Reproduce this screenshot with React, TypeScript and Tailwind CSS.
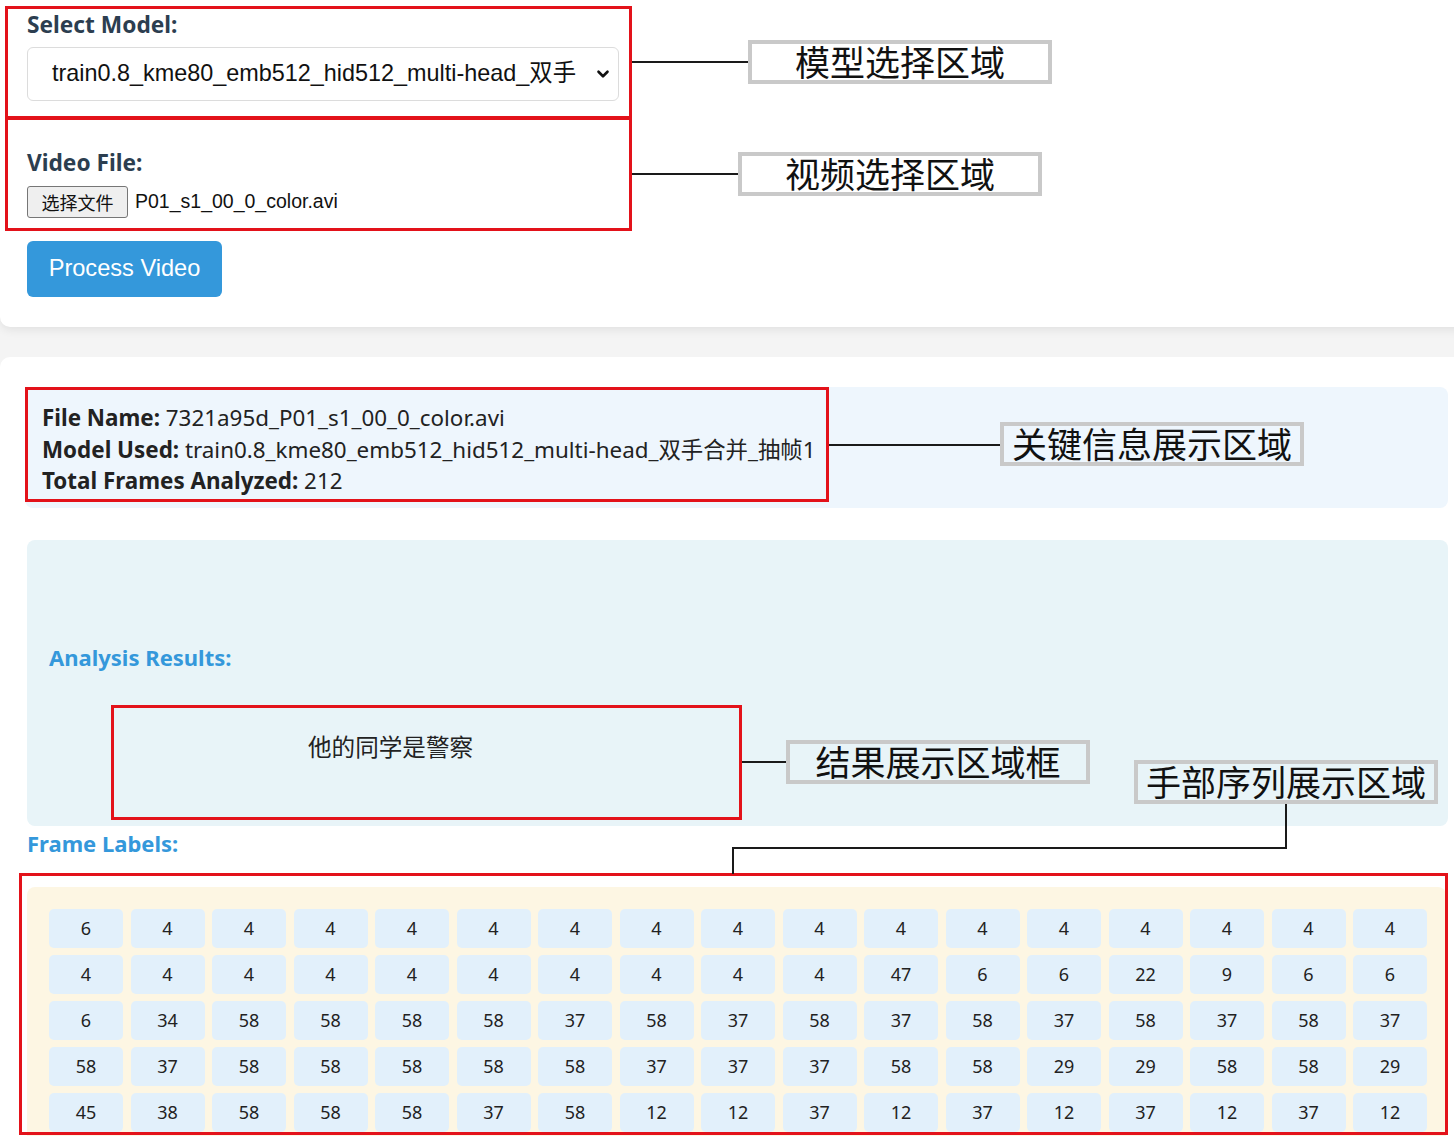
import { ChevronDown } from "lucide-react";

const uiFont = { fontFamily: '"Noto Sans", "Noto Sans CJK SC", sans-serif' };
const arial = { fontFamily: '"Liberation Sans", "Noto Sans CJK SC", sans-serif' };
const noteFont = { fontFamily: '"Noto Sans CJK SC", sans-serif' };

const frameRows = [
  [6, 4, 4, 4, 4, 4, 4, 4, 4, 4, 4, 4, 4, 4, 4, 4, 4],
  [4, 4, 4, 4, 4, 4, 4, 4, 4, 4, 47, 6, 6, 22, 9, 6, 6],
  [6, 34, 58, 58, 58, 58, 37, 58, 37, 58, 37, 58, 37, 58, 37, 58, 37],
  [58, 37, 58, 58, 58, 58, 58, 37, 37, 37, 58, 58, 29, 29, 58, 58, 29],
  [45, 38, 58, 58, 58, 37, 58, 12, 12, 37, 12, 37, 12, 37, 12, 37, 12],
];

function RedBox({ l, t, w, h }: { l: number; t: number; w: number; h: number }) {
  return (
    <div
      className="absolute border-[3px] border-[#e3121a] pointer-events-none"
      style={{ left: l, top: t, width: w, height: h }}
    />
  );
}

function Line({ l, t, w, h }: { l: number; t: number; w: number; h: number }) {
  return <div className="absolute bg-[#1a1a1a]" style={{ left: l, top: t, width: w, height: h }} />;
}

function Callout({ l, t, w, text }: { l: number; t: number; w: number; text: string }) {
  return (
    <div
      className="absolute h-[44px] border-[4px] border-[#c9c9c9] flex items-center justify-center text-[35px] leading-none text-[#111] pb-[3px]"
      style={{ left: l, top: t, width: w, ...noteFont }}
    >
      {text}
    </div>
  );
}

export default function App() {
  return (
    <div className="relative w-[1454px] h-[1136px] overflow-hidden bg-[#f4f4f4]" style={uiFont}>
      {/* upload card */}
      <div className="w-[1480px] bg-white rounded-b-[10px] shadow-[0_3px_10px_rgba(0,0,0,0.08)] pl-[27px] pt-[10px] pb-[30px]">
        <div className="text-[22.7px] leading-[30px] font-bold text-[#2c3e50]">Select Model:</div>
        <div
          className="mt-[7px] w-[592px] h-[54px] border border-[#dcdcdc] rounded-[6px] flex items-center justify-between pl-[24px] pr-[6px] text-[23.4px] text-[#111]"
          style={arial}
        >
          <span>train0.8_kme80_emb512_hid512_multi-head_双手</span>
          <ChevronDown className="w-[18px] h-[18px]" strokeWidth={3.5} />
        </div>
        <div className="mt-[47px] text-[22.7px] leading-[30px] font-bold text-[#2c3e50]">Video File:</div>
        <div className="mt-[8px] flex items-center h-[32px] gap-[7px]">
          <span
            className="h-[32px] w-[101px] flex items-center justify-center bg-[#efefef] border border-[#767676] rounded-[3px] text-[18px] text-[#111]"
            style={noteFont}
          >
            选择文件
          </span>
          <span className="text-[19.5px] text-[#111]" style={arial}>
            P01_s1_00_0_color.avi
          </span>
        </div>
        <button
          className="mt-[23px] w-[195px] h-[56px] bg-[#3498db] rounded-[6px] text-white text-[23.6px]"
          style={arial}
        >
          Process Video
        </button>
      </div>

      {/* results card */}
      <div className="mt-[30px] w-[1480px] bg-white rounded-t-[10px] pt-[30px] pl-[25px]">
        <div className="w-[1423px] h-[121px] bg-[#eef6fd] rounded-[8px] pt-[15px] pl-[17px] text-[22.4px] leading-[31.5px] text-[#222]">
          <div>
            <b>File Name:</b> 7321a95d_P01_s1_00_0_color.avi
          </div>
          <div>
            <b>Model Used:</b> train0.8_kme80_emb512_hid512_multi-head_双手合并_抽帧1
          </div>
          <div>
            <b>Total Frames Analyzed:</b> 212
          </div>
        </div>

        <div className="mt-[32px] ml-[2px] w-[1421px] h-[286px] bg-[#e8f4f8] rounded-[8px] pt-[102px] pl-[22px]">
          <div className="text-[22px] leading-[30px] font-bold text-[#3498db]">Analysis Results:</div>
          <div className="mt-[62px] pl-[259px] text-[23.6px] leading-[26px] text-[#222]">他的同学是警察</div>
        </div>

        <div className="mt-[2px] ml-[2px] text-[22px] leading-[30px] font-bold text-[#3498db]">Frame Labels:</div>
        <div className="mt-[29px] ml-[2px] w-[1419px] bg-[#fdf6e3] rounded-[8px] pt-[22px] pl-[22px] pb-[22px]">
          <div className="grid grid-cols-[repeat(17,74px)] gap-x-[7.5px] gap-y-[7px]">
            {frameRows.flat().map((n, i) => (
              <div
                key={i}
                className="h-[39px] rounded-[5px] bg-[#e2f0fb] flex items-center justify-center text-[18px] text-[#222]"
              >
                {n}
              </div>
            ))}
          </div>
        </div>
      </div>

      {/* annotations */}
      <RedBox l={5} t={6} w={627} h={113} />
      <RedBox l={5} t={117} w={627} h={114} />
      <RedBox l={25} t={387} w={804} h={115} />
      <RedBox l={111} t={705} w={631} h={115} />
      <RedBox l={19} t={873} w={1429} h={262} />

      <Line l={632} t={61} w={117} h={2} />
      <Line l={632} t={173} w={107} h={2} />
      <Line l={829} t={444} w={173} h={2} />
      <Line l={742} t={761} w={46} h={2} />
      <Line l={1285} t={803} w={2} h={46} />
      <Line l={732} t={847} w={555} h={2} />
      <Line l={732} t={847} w={2} h={27} />

      <Callout l={748} t={40} w={304} text="模型选择区域" />
      <Callout l={738} t={152} w={304} text="视频选择区域" />
      <Callout l={1000} t={422} w={304} text="关键信息展示区域" />
      <Callout l={786} t={740} w={304} text="结果展示区域框" />
      <Callout l={1134} t={760} w={304} text="手部序列展示区域" />
    </div>
  );
}
